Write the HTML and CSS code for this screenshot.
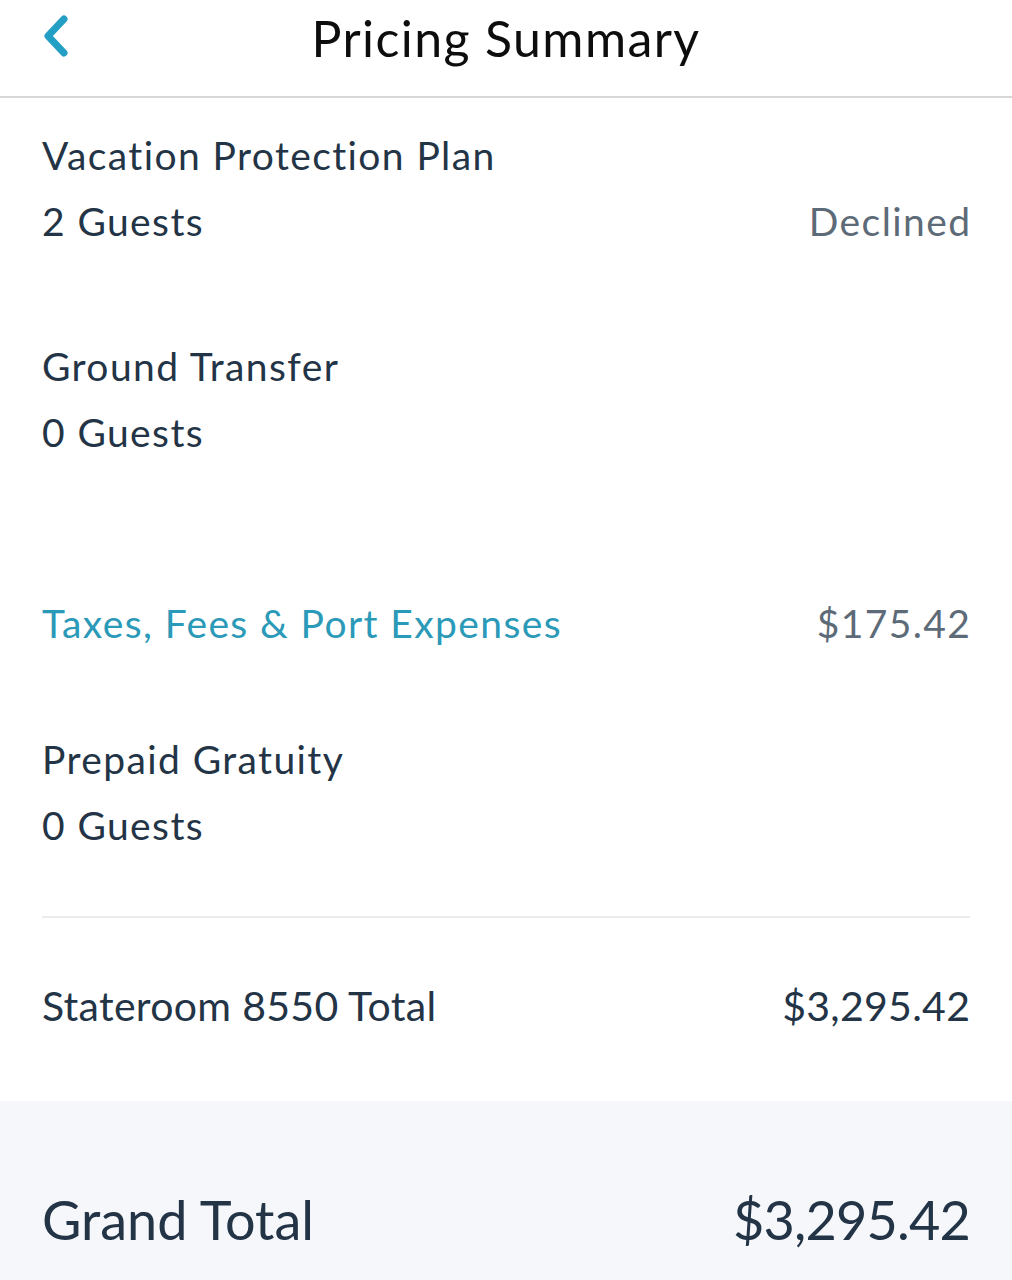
FILE: index.html
```html
<!DOCTYPE html>
<html lang="en">
<head>
    <meta charset="UTF-8">
    <meta name="viewport" content="width=device-width, initial-scale=1.0">
    <title>Pricing Summary</title>
    <link rel="stylesheet" href="styles.css">
</head>
<body>
    <header class="topbar">
        <a class="back" href="#" aria-label="Back">
            <svg width="30" height="44" viewBox="0 0 30 44">
                <path d="M24 5 L8 22 L24 39" fill="none" stroke="#239fc3" stroke-width="7" stroke-linecap="round" stroke-linejoin="round"/>
            </svg>
        </a>
        <h1>Pricing Summary</h1>
        <span></span>
    </header>

    <main class="summary">
        <section class="item item-first">
            <div class="row"><span class="label">Vacation Protection Plan</span></div>
            <div class="row"><span class="label">2 Guests</span><span class="value muted">Declined</span></div>
        </section>

        <section class="item item-ground">
            <div class="row"><span class="label">Ground Transfer</span></div>
            <div class="row"><span class="label">0 Guests</span></div>
        </section>

        <section class="item item-taxes">
            <div class="row"><a class="label link" href="#">Taxes, Fees &amp; Port Expenses</a><span class="value muted">$175.42</span></div>
        </section>

        <section class="item item-gratuity">
            <div class="row"><span class="label">Prepaid Gratuity</span></div>
            <div class="row"><span class="label">0 Guests</span></div>
        </section>

        <div class="stateroom">
            <div class="row total-row"><span class="label">Stateroom 8550 Total</span><span class="value">$3,295.42</span></div>
        </div>
    </main>

    <footer class="grand">
        <div class="row grand-row"><span class="label">Grand Total</span><span class="value">$3,295.42</span></div>
    </footer>
</body>
</html>
```

FILE: styles.css
```css
* {
    margin: 0;
    padding: 0;
    box-sizing: border-box;
}

body {
    font-family: 'Lato', 'Liberation Sans', sans-serif;
    background: #ffffff;
    color: #233446;
    height: 1280px;
    overflow: hidden;
}

/* Barra superior */
.topbar {
    height: 98px;
    border-bottom: 2px solid #d7d7d7;
    display: grid;
    grid-template-columns: 1fr auto 1fr;
    align-items: center;
    padding: 0 42px;
}

.topbar h1 {
    font-size: 50px;
    font-weight: 400;
    letter-spacing: 1.4px;
    color: #0d0d0d;
    margin-top: -20px;
}

.back {
    display: flex;
    align-items: center;
    margin-top: -24px;
    margin-left: -2px;
}

/* Lista de itens */
.summary {
    padding: 0 42px;
}

.row {
    display: flex;
    justify-content: space-between;
    align-items: baseline;
    line-height: 66px;
    font-size: 39px;
    letter-spacing: 1.4px;
}

.label {
    color: #233446;
}

.link {
    color: #2a9ab8;
    text-decoration: none;
}

.value {
    color: #233446;
    margin-right: -1.4px;
}

.muted {
    color: #5d6b78;
}

.item-first {
    padding-top: 24px;
}

.item-ground {
    padding-top: 79px;
}

.item-taxes {
    padding-top: 125px;
}

.item-gratuity {
    padding-top: 70px;
}

.stateroom {
    margin-top: 58px;
    border-top: 2px solid #ececec;
    height: 185px;
    display: flex;
    align-items: center;
}

.total-row {
    width: 100%;
    font-size: 41px;
    letter-spacing: 0.3px;
    margin-bottom: 7px;
}

.total-row .value {
    margin-right: -0.3px;
}

/* Total geral */
.grand {
    background: #f5f7fa;
    height: 180px;
    padding: 0 42px;
    display: flex;
    align-items: center;
}

.grand-row {
    width: 100%;
    font-size: 54px;
    letter-spacing: 0;
    margin-top: 58px;
}

.grand-row .value {
    letter-spacing: -0.8px;
    margin-right: 0;
}
```
